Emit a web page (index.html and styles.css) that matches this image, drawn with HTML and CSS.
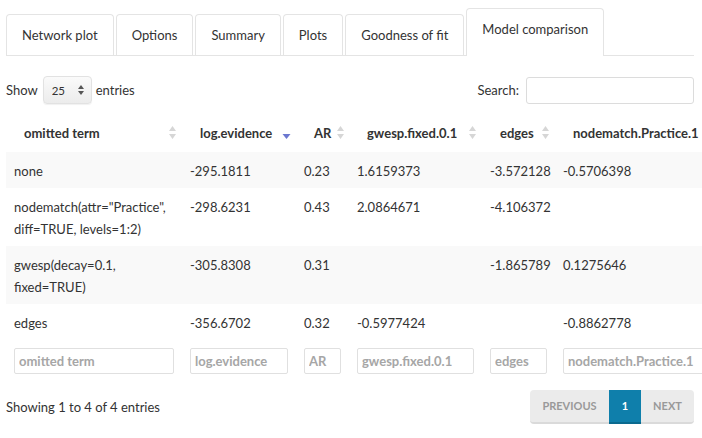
FILE: index.html
```html
<!DOCTYPE html>
<html lang="en">
<head>
<meta charset="utf-8">
<title>Model comparison</title>
<link rel="stylesheet" href="styles.css">
</head>
<body>
<div class="page">
  <ul class="tabs">
    <li class="tab">Network plot</li>
    <li class="tab">Options</li>
    <li class="tab">Summary</li>
    <li class="tab">Plots</li>
    <li class="tab">Goodness of fit</li>
    <li class="tab active">Model comparison</li>
  </ul>

  <div class="controls">
    <label class="length">Show
      <span class="select">
        <select><option>25</option></select>
        <svg class="select-arrows" width="6" height="10" viewBox="0 0 6 10"><path d="M3 0 L6 4 L0 4 Z M0 6 L6 6 L3 10 Z" fill="#555"/></svg>
      </span>
      entries</label>
    <label class="search">Search: <input type="search"></label>
  </div>

  <div class="table-wrap">
    <table class="dt">
      <colgroup>
        <col class="c1"><col class="c2"><col class="c3"><col class="c4"><col class="c5"><col class="c6">
      </colgroup>
      <thead>
        <tr>
          <th><div class="th-in"><span>omitted term</span><svg class="sort" viewBox="0 0 19 16"><path d="M9.5 1 L13 6 L6 6 Z M6 9 L13 9 L9.5 14 Z" fill="#d6d6d6"/></svg></div></th>
          <th><div class="th-in"><span>log.evidence</span><svg class="sort" viewBox="0 0 19 16"><path d="M5.5 9 L13.5 9 L9.5 14 Z" fill="#6b77d0"/></svg></div></th>
          <th><div class="th-in"><span>AR</span><svg class="sort" viewBox="0 0 19 16"><path d="M9.5 1 L13 6 L6 6 Z M6 9 L13 9 L9.5 14 Z" fill="#d6d6d6"/></svg></div></th>
          <th><div class="th-in"><span>gwesp.fixed.0.1</span><svg class="sort" viewBox="0 0 19 16"><path d="M9.5 1 L13 6 L6 6 Z M6 9 L13 9 L9.5 14 Z" fill="#d6d6d6"/></svg></div></th>
          <th><div class="th-in"><span>edges</span><svg class="sort" viewBox="0 0 19 16"><path d="M9.5 1 L13 6 L6 6 Z M6 9 L13 9 L9.5 14 Z" fill="#d6d6d6"/></svg></div></th>
          <th><div class="th-in"><span>nodematch.Practice.1</span><svg class="sort" viewBox="0 0 19 16"><path d="M9.5 1 L13 6 L6 6 Z M6 9 L13 9 L9.5 14 Z" fill="#d6d6d6"/></svg></div></th>
        </tr>
      </thead>
      <tbody>
        <tr class="odd"><td>none</td><td>-295.1811</td><td>0.23</td><td>1.6159373</td><td>-3.572128</td><td>-0.5706398</td></tr>
        <tr><td>nodematch(attr="Practice", diff=TRUE, levels=1:2)</td><td>-298.6231</td><td>0.43</td><td>2.0864671</td><td>-4.106372</td><td></td></tr>
        <tr class="odd"><td>gwesp(decay=0.1, fixed=TRUE)</td><td>-305.8308</td><td>0.31</td><td></td><td>-1.865789</td><td>0.1275646</td></tr>
        <tr><td>edges</td><td>-356.6702</td><td>0.32</td><td>-0.5977424</td><td></td><td>-0.8862778</td></tr>
      </tbody>
      <tfoot>
        <tr>
          <td><input class="filter" placeholder="omitted term"></td>
          <td><input class="filter" placeholder="log.evidence"></td>
          <td><input class="filter" placeholder="AR"></td>
          <td><input class="filter" placeholder="gwesp.fixed.0.1"></td>
          <td><input class="filter" placeholder="edges"></td>
          <td><input class="filter" placeholder="nodematch.Practice.1"></td>
        </tr>
      </tfoot>
    </table>
  </div>

  <div class="footer">
    <div class="info">Showing 1 to 4 of 4 entries</div>
    <ul class="pagination">
      <li class="pg prev">Previous</li>
      <li class="pg current">1</li>
      <li class="pg next">Next</li>
    </ul>
  </div>
</div>
</body>
</html>
```

FILE: styles.css
```css
html, body {
  margin: 0;
  padding: 0;
  overflow: hidden;
  background: #fff;
}
body {
  font-family: Lato, "Open Sans", sans-serif;
  font-size: 13px;
  line-height: 20px;
  color: #333;
}
.page {
  width: 688px;
  padding-left: 6px;
}

/* tabs */
.tabs {
  list-style: none;
  margin: 0;
  padding: 8px 0 0 0;
  height: 47px;
  display: flex;
  align-items: flex-end;
  border-bottom: 1px solid #e4e4e4;
}
.tab {
  height: 40px;
  padding: 0 15px;
  margin-right: 2px;
  border: 1px solid #e4e4e4;
  border-bottom: none;
  border-radius: 4px 4px 0 0;
  display: flex;
  align-items: center;
  color: #333;
  background: #fff;
  white-space: nowrap;
  font-size: 13px;
}
.tab.active {
  margin-bottom: -1px;
  align-items: flex-start;
  padding-top: 10px;
  box-sizing: border-box;
  height: 48px;
}

/* controls */
.controls {
  margin-top: 20px;
  height: 28px;
  display: flex;
  justify-content: space-between;
  align-items: center;
}
.length, .search {
  display: flex;
  align-items: center;
  color: #333;
}
.select {
  position: relative;
  display: inline-block;
  margin: 0 4px 0 5px;
}
.select select {
  appearance: none;
  -webkit-appearance: none;
  width: 49px;
  height: 28px;
  padding: 0 0 0 8px;
  border: 1px solid #e2e2e2;
  border-radius: 4px;
  background: linear-gradient(#fafafa, #ececec);
  font-family: inherit;
  font-size: 11.5px;
  color: #333;
  box-shadow: 0 1px 1px rgba(0,0,0,0.06);
}
.select-arrows {
  position: absolute;
  right: 8px;
  top: 9px;
}
.search input {
  margin-left: 7px;
  width: 168px;
  height: 27px;
  box-sizing: border-box;
  border: 1px solid #dcdcdc;
  border-radius: 3px;
  padding: 0 6px;
  font-family: inherit;
}

/* table */
.table-wrap {
  margin-top: 8px;
  width: 696px;
  overflow: hidden;
}
.dt {
  border-collapse: collapse;
  table-layout: fixed;
  width: 729px;
}
.c1 { width: 176px; }
.c2 { width: 114px; }
.c3 { width: 53px; }
.c4 { width: 133px; }
.c5 { width: 73px; }
.c6 { width: 180px; }
.dt th {
  padding: 11px 0 9px 18px;
  font-weight: 700;
  text-align: left;
  color: #333;
}
.th-in {
  display: flex;
  align-items: center;
  white-space: nowrap;
}
.sort {
  flex: none;
  width: 19px;
  height: 16px;
  margin-left: auto;
  margin-top: 0;
}
.dt td {
  padding: 8px 8px 6px;
  line-height: 22px;
  vertical-align: top;
  color: #333;
}
.dt tbody tr.odd td {
  background: #f9f9f9;
}
.dt tfoot td {
  padding: 8px;
}
.filter {
  display: block;
  width: 100%;
  height: 26px;
  box-sizing: border-box;
  border: 1px solid #e0e0e0;
  border-radius: 2px;
  padding: 0 4px;
  font-family: inherit;
  font-size: 13px;
  font-weight: 700;
}
.filter::placeholder {
  color: #a6a6a6;
  font-weight: 700;
}

/* footer */
.footer {
  margin-top: 8px;
  display: flex;
  justify-content: space-between;
  align-items: center;
}
.info {
  color: #333;
}
.pagination {
  list-style: none;
  margin: 0;
  padding: 0;
  display: flex;
}
.pg {
  height: 32px;
  display: flex;
  align-items: center;
  background: #ebebeb;
  border-bottom: 2px solid #dadada;
  color: #999;
  font-size: 11px;
  font-weight: 700;
  text-transform: uppercase;
}
.prev {
  width: 79px;
  justify-content: center;
  border-radius: 4px 0 0 4px;
}
.current {
  width: 32px;
  justify-content: center;
  background: #0f7fab;
  border-bottom-color: #0b6a8f;
  color: #fff;
}
.next {
  width: 53px;
  justify-content: center;
  border-radius: 0 4px 4px 0;
}
```
